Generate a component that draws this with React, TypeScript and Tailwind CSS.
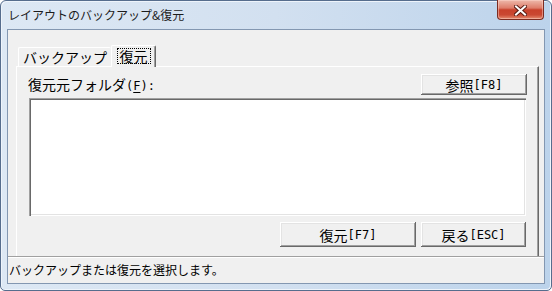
import type { ReactNode } from "react";

// half-width ascii in the dialog font is monospaced, ~7px wide
function Mono({ children }: { children: ReactNode }) {
  return <span className="font-['DejaVu_Sans_Mono',monospace] text-[12px]">{children}</span>;
}

function CloseButton() {
  return (
    <div className="absolute right-[7px] top-[-1px] flex h-[20px] w-[47px] items-center justify-center rounded-b-[4px] border border-t-0 border-[#7c2c21] bg-[linear-gradient(#eeb9ab_0%,#de7d6a_42%,#c8412b_52%,#ca4832_78%,#e58c70_100%)] shadow-[inset_0_0_0_1px_rgba(255,220,210,0.45)]">
      <svg width="13" height="11" viewBox="0 0 13 11" className="mt-[2px]">
        <path d="M2 1.5 L11 9.5 M11 1.5 L2 9.5" stroke="#5b1d14" strokeWidth="4" strokeLinecap="square" fill="none" />
        <path d="M2 1.5 L11 9.5 M11 1.5 L2 9.5" stroke="#ffffff" strokeWidth="2" strokeLinecap="square" fill="none" />
      </svg>
    </div>
  );
}

function ClassicButton({ width, height, children }: { width: string; height: string; children: ReactNode }) {
  return (
    <div
      className={`flex ${width} ${height} items-center justify-center bg-[#f0f0f0] text-[14px] leading-[16px] shadow-[inset_-1px_-1px_#696969,inset_1px_1px_#ffffff,inset_-2px_-2px_#a0a0a0,inset_2px_2px_#e3e3e3]`}
    >
      {children}
    </div>
  );
}

export default function App() {
  return (
    <div className="h-[291px] w-[552px] bg-white font-['Noto_Sans_CJK_JP',sans-serif] text-black">
      <div className="relative flex h-full flex-col rounded-t-[6px] rounded-b-[5px] border border-[#566d8d] bg-gradient-to-r from-[#dde8f4] via-[#d2e0f0] to-[#bcd3eb] shadow-[inset_1px_1px_0_#eef4fb,inset_-1px_-1px_0_#eef4fb]">
        {/* title bar */}
        <div className="flex h-[28px] shrink-0 items-center pb-[1px] pl-[7px] text-[12px] leading-[14px] text-[#1c1c1c]">
          レイアウトのバックアップ&amp;復元
        </div>
        <CloseButton />

        {/* client area */}
        <div className="mx-[6px] mb-[6px] flex min-h-0 flex-1 flex-col border border-[#8397b1] bg-[#f0f0f0]">
          <div className="flex min-h-0 flex-1 flex-col pl-[8px] pr-[5px] pt-[15px]">
            {/* tab headers */}
            <div className="flex h-[21px] shrink-0 items-end pl-[2px]">
              <div className="flex h-[19px] w-[93px] items-center justify-center rounded-t-[2px] border-l border-t border-white text-[14px] leading-[16px]">
                バックアップ
              </div>
              <div className="relative z-10 -mb-px flex h-[22px] w-[45px] items-start justify-center rounded-t-[2px] border-l border-t border-r border-white border-r-[#696969] bg-[#f0f0f0] pt-[2px] shadow-[inset_-1px_0_#a0a0a0]">
                <span className="border border-dotted border-black px-[2px] text-[14px] leading-[14px]">復元</span>
              </div>
            </div>

            {/* tab page */}
            <div className="flex min-h-0 flex-1 flex-col border-l border-r border-t border-white border-r-[#696969] pl-[12px] pr-[12px] pt-[7px] shadow-[inset_-1px_0_#a0a0a0]">
              <div className="flex h-[21px] items-center justify-between">
                <span className="-ml-px text-[14px] leading-[16px]">
                  復元元フォルダ
                  <Mono>
                    (<span className="underline underline-offset-2">F</span>):
                  </Mono>
                </span>
                <div className="-mr-px">
                  <ClassicButton width="w-[106px]" height="h-[21px]">
                    参照<Mono>[F8]</Mono>
                  </ClassicButton>
                </div>
              </div>

              <div className="mt-[3px] h-[118px] bg-white shadow-[inset_1px_1px_#a0a0a0,inset_2px_2px_#696969,inset_-1px_-1px_#ffffff,inset_-2px_-2px_#e3e3e3]" />

              <div className="mt-[6px] flex justify-end gap-[5px]">
                <ClassicButton width="w-[136px]" height="h-[25px]">
                  復元<Mono>[F7]</Mono>
                </ClassicButton>
                <ClassicButton width="w-[105px]" height="h-[25px]">
                  戻る<Mono>[ESC]</Mono>
                </ClassicButton>
              </div>
            </div>
          </div>

          {/* status bar */}
          <div className="flex h-[27px] shrink-0 items-center border-t border-[#a0a0a0] pl-[1px] text-[12px] leading-[14px] shadow-[inset_0_1px_#ffffff]">
            バックアップまたは復元を選択します。
          </div>
        </div>
      </div>
    </div>
  );
}
